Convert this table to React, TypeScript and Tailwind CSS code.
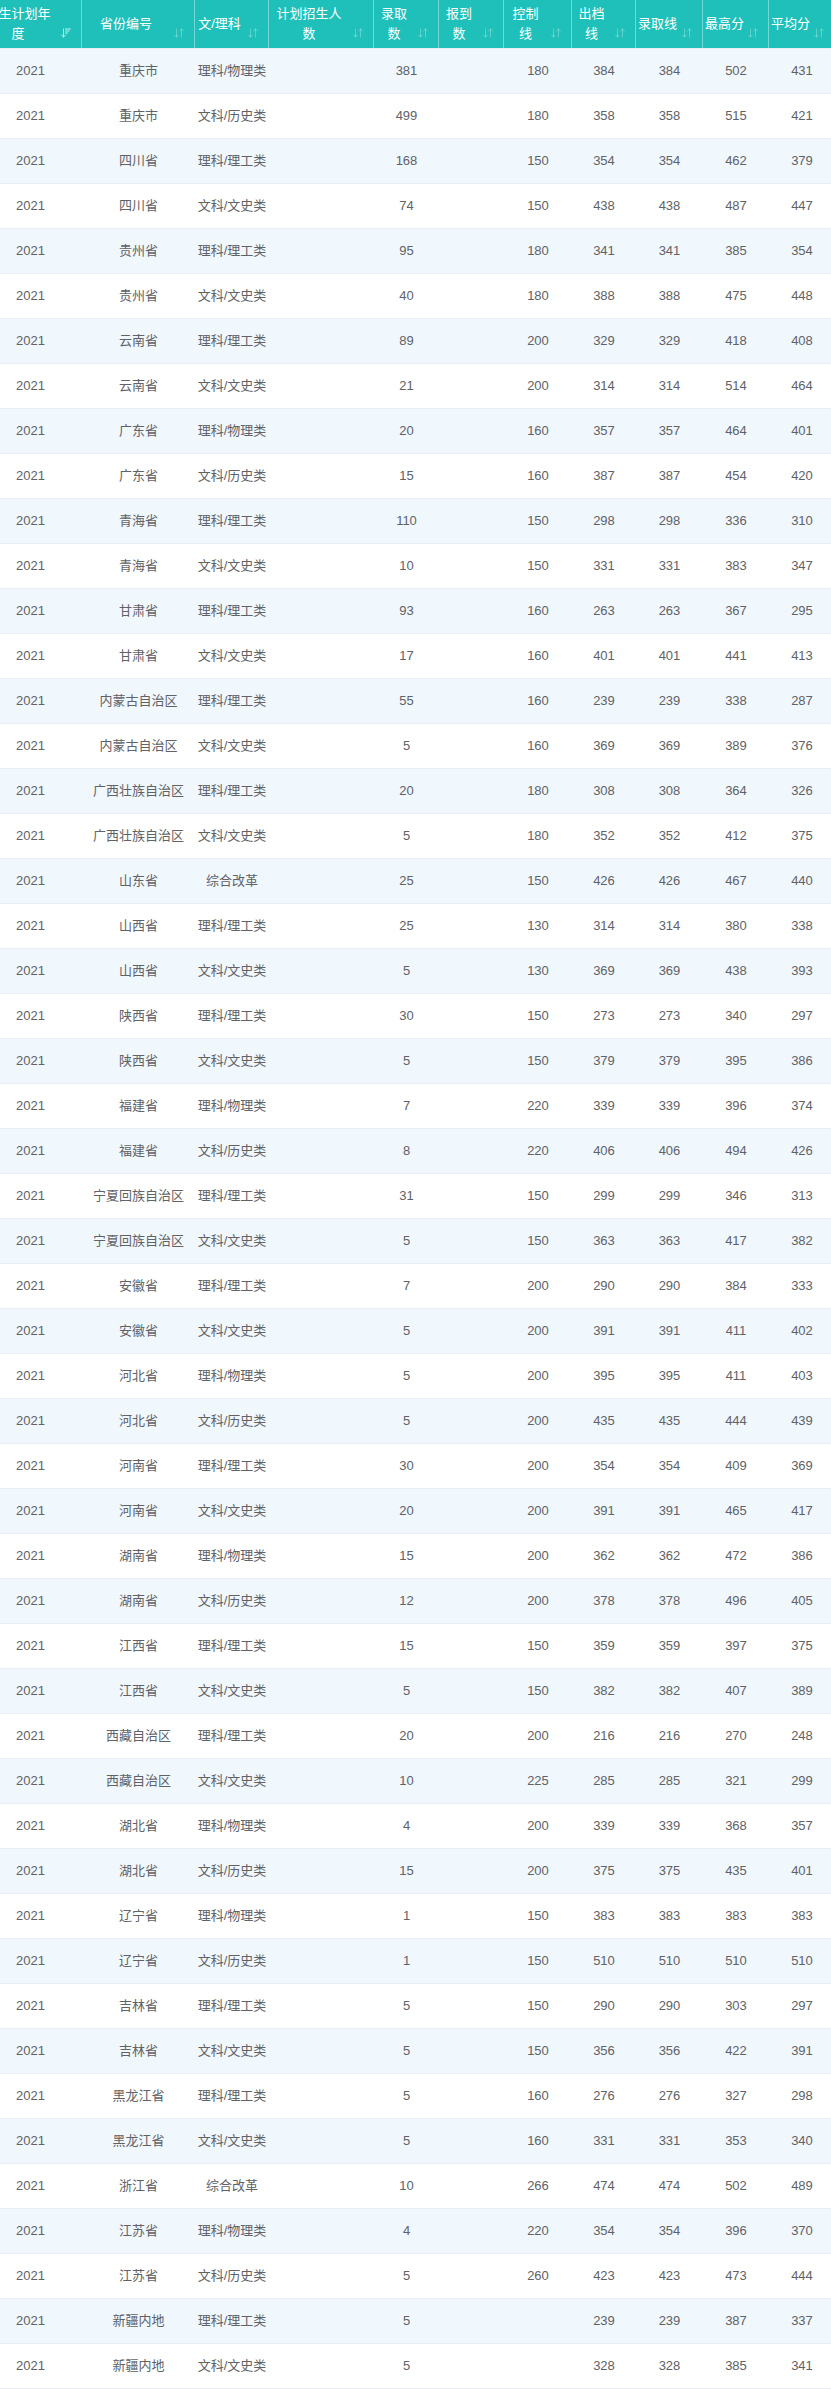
import { ArrowDownUp, ArrowDownWideNarrow } from "lucide-react"

// column widths; the table is scrolled sideways so the first 21px are cut off
const GRID = "grid grid-cols-[103px_113px_74px_105px_65px_65px_68px_64px_67px_66px_66px]"

const HEADERS: string[][] = [
  ["招生计划年", "度"],
  ["省份编号"],
  ["文/理科"],
  ["计划招生人", "数"],
  ["录取", "数"],
  ["报到", "数"],
  ["控制", "线"],
  ["出档", "线"],
  ["录取线"],
  ["最高分"],
  ["平均分"],
]

// 省份, 文理, 录取数, 控制线, 出档线, 录取线, 最高分, 平均分
const RAW = `重庆市,理科/物理类,381,180,384,384,502,431
重庆市,文科/历史类,499,180,358,358,515,421
四川省,理科/理工类,168,150,354,354,462,379
四川省,文科/文史类,74,150,438,438,487,447
贵州省,理科/理工类,95,180,341,341,385,354
贵州省,文科/文史类,40,180,388,388,475,448
云南省,理科/理工类,89,200,329,329,418,408
云南省,文科/文史类,21,200,314,314,514,464
广东省,理科/物理类,20,160,357,357,464,401
广东省,文科/历史类,15,160,387,387,454,420
青海省,理科/理工类,110,150,298,298,336,310
青海省,文科/文史类,10,150,331,331,383,347
甘肃省,理科/理工类,93,160,263,263,367,295
甘肃省,文科/文史类,17,160,401,401,441,413
内蒙古自治区,理科/理工类,55,160,239,239,338,287
内蒙古自治区,文科/文史类,5,160,369,369,389,376
广西壮族自治区,理科/理工类,20,180,308,308,364,326
广西壮族自治区,文科/文史类,5,180,352,352,412,375
山东省,综合改革,25,150,426,426,467,440
山西省,理科/理工类,25,130,314,314,380,338
山西省,文科/文史类,5,130,369,369,438,393
陕西省,理科/理工类,30,150,273,273,340,297
陕西省,文科/文史类,5,150,379,379,395,386
福建省,理科/物理类,7,220,339,339,396,374
福建省,文科/历史类,8,220,406,406,494,426
宁夏回族自治区,理科/理工类,31,150,299,299,346,313
宁夏回族自治区,文科/文史类,5,150,363,363,417,382
安徽省,理科/理工类,7,200,290,290,384,333
安徽省,文科/文史类,5,200,391,391,411,402
河北省,理科/物理类,5,200,395,395,411,403
河北省,文科/历史类,5,200,435,435,444,439
河南省,理科/理工类,30,200,354,354,409,369
河南省,文科/文史类,20,200,391,391,465,417
湖南省,理科/物理类,15,200,362,362,472,386
湖南省,文科/历史类,12,200,378,378,496,405
江西省,理科/理工类,15,150,359,359,397,375
江西省,文科/文史类,5,150,382,382,407,389
西藏自治区,理科/理工类,20,200,216,216,270,248
西藏自治区,文科/文史类,10,225,285,285,321,299
湖北省,理科/物理类,4,200,339,339,368,357
湖北省,文科/历史类,15,200,375,375,435,401
辽宁省,理科/物理类,1,150,383,383,383,383
辽宁省,文科/历史类,1,150,510,510,510,510
吉林省,理科/理工类,5,150,290,290,303,297
吉林省,文科/文史类,5,150,356,356,422,391
黑龙江省,理科/理工类,5,160,276,276,327,298
黑龙江省,文科/文史类,5,160,331,331,353,340
浙江省,综合改革,10,266,474,474,502,489
江苏省,理科/物理类,4,220,354,354,396,370
江苏省,文科/历史类,5,260,423,423,473,444
新疆内地,理科/理工类,5,,239,239,387,337
新疆内地,文科/文史类,5,,328,328,385,341`

const ROWS = RAW.split("\n").map(line => {
  const [prov, kind, admit, ctrl, file, line2, max, avg] = line.split(",")
  return ["2021", prov, kind, "", admit, "", ctrl, file, line2, max, avg]
})

function HeaderRow() {
  return (
    <div className={`${GRID} h-[49px] bg-[#20c0ba] border-b border-[#ebeef5]`}>
      {HEADERS.map((lines, i) => (
        <div key={i} className="relative flex h-full items-center border-r border-[#72d9d4]">
          <div className="w-full pl-[2px] pr-[26px] text-center text-[13px] leading-[20px] text-white">
            {lines.map(l => (
              <div key={l} className="whitespace-nowrap">{l}</div>
            ))}
          </div>
          <span className="absolute right-[9px] top-[27px]">
            {i === 0
              ? <ArrowDownWideNarrow size={12} strokeWidth={1.6} className="text-white/90" />
              : <ArrowDownUp size={12} strokeWidth={1.4} className="text-white/40" />}
          </span>
        </div>
      ))}
    </div>
  )
}

export default function App() {
  return (
    <div className="w-[831px] overflow-hidden bg-white font-['Liberation_Sans','Noto_Sans_CJK_SC',sans-serif]">
      <div className="-ml-[21px] w-[856px]">
        <HeaderRow />
        {ROWS.map((row, r) => (
          <div key={r}
            className={`${GRID} h-[45px] border-b border-[#ebeef5] ${r % 2 === 0 ? "bg-[#f0f7fd]" : "bg-white"}`}>
            {row.map((cell, c) => (
              <div key={c} className="flex items-center justify-center whitespace-nowrap text-[13px] text-[#606266]">
                {cell}
              </div>
            ))}
          </div>
        ))}
      </div>
    </div>
  )
}
